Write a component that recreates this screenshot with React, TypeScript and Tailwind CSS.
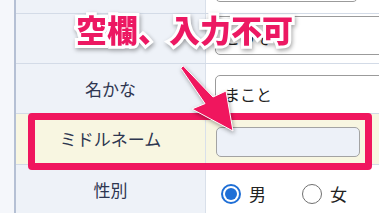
import * as React from "react"

const jp = { fontFamily: '"Noto Sans CJK JP", "Noto Sans", sans-serif' }

function Label({ children }: { children?: React.ReactNode }) {
  return (
    <div className="w-[190px] shrink-0 flex items-center justify-center border-r border-[#d9e0ea] text-[17px] text-[#2e3650]">
      {children}
    </div>
  )
}

function Radio({ checked, label }: { checked?: boolean; label: string }) {
  return (
    <div className="flex items-center gap-[8px]">
      {checked ? (
        <span className="w-[20px] h-[20px] rounded-full border-2 border-[#1f6fd6] flex items-center justify-center bg-white">
          <span className="w-[12px] h-[12px] rounded-full bg-[#1f6fd6]" />
        </span>
      ) : (
        <span className="w-[20px] h-[20px] rounded-full border-[1.5px] border-[#707070] bg-white" />
      )}
      <span className="text-[17px] text-[#222]">{label}</span>
    </div>
  )
}

export default function App() {
  return (
    <div className="relative w-[379px] h-[213px] overflow-hidden bg-[#f5f7fb]" style={jp}>
      <div className="ml-[14px] border-l-2 border-[#b5c0d4] -mt-[36px] flex flex-col">
        {/* row 1 */}
        <div className="flex h-[50px] border-b border-[#d3dbe7] bg-[#eef2f8]">
          <Label />
          <div className="flex-1 bg-white flex items-end pl-[9px] pb-[11px]">
            <div className="w-[143px] h-[36px] border border-[#9b9b9b] rounded-[5px]" />
          </div>
        </div>
        {/* row 2 */}
        <div className="flex h-[50px] border-b border-[#d3dbe7] bg-[#eef2f8]">
          <Label />
          <div className="flex-1 bg-white pl-[9px] pt-[2px]">
            <div className="w-[190px] h-[39px] border border-[#9b9b9b] rounded-[5px] flex items-center pl-[8px] pt-[2px] text-[16px] text-[#222]">
              こうぞう
            </div>
          </div>
        </div>
        {/* row 3 */}
        <div className="flex h-[50px] border-b border-[#d3dbe7] bg-[#eef2f8]">
          <Label>名かな</Label>
          <div className="flex-1 bg-white pl-[9px] pt-[11px]">
            <div className="w-[190px] h-[40px] border border-[#9b9b9b] rounded-[5px] flex items-start pt-[6px] pl-[8px] text-[16px] text-[#222]">
              まこと
            </div>
          </div>
        </div>
        {/* row 4 */}
        <div className="flex h-[51px] border-b border-[#d3dbe7] bg-[#f8f6e1]">
          <Label>ミドルネーム</Label>
          <div className="flex-1 pl-[10px] pt-[13px]">
            <div className="w-[144px] h-[30px] border border-[#a3a3a3] rounded-[5px] bg-[#edf1f8]" />
          </div>
        </div>
        {/* row 5 */}
        <div className="flex h-[50px] bg-[#eef2f8]">
          <Label>性別</Label>
          <div className="flex-1 bg-white flex items-center gap-[36px] pl-[15px] pt-[8px]">
            <Radio checked label="男" />
            <Radio label="女" />
          </div>
        </div>
      </div>

      {/* highlight box */}
      <div className="absolute left-[28px] top-[113px] w-[344px] h-[57px] border-[7px] border-[#f0165e] rounded-[4px]" />

      {/* arrow */}
      <svg className="absolute left-0 top-0 drop-shadow-[1px_2px_2px_rgba(0,0,0,0.35)]" width="379" height="213" viewBox="0 0 379 213">
        <polygon
          points="180.8,68.2 183.2,65.8 213,97 226,91 233,131 192,109 205,103.6"
          fill="#f0165e"
          stroke="#ffffff"
          strokeWidth="1"
          strokeLinejoin="round"
        />
      </svg>

      {/* callout */}
      <div className="absolute left-[76px] top-[13px] text-[31px] leading-none font-black text-[#ec1862] [paint-order:stroke_fill] [-webkit-text-stroke:6px_white] [filter:drop-shadow(1px_2px_2px_rgba(0,0,0,0.35))]">
        空欄、入力不可
      </div>
    </div>
  )
}
